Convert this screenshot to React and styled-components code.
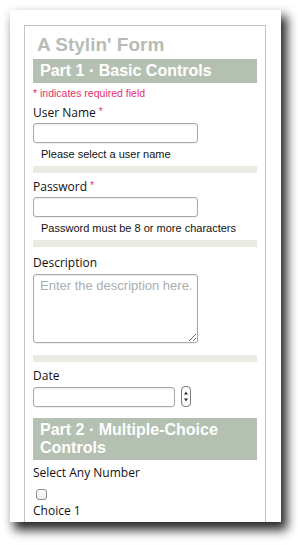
import React from "react";
import styled, { createGlobalStyle } from "styled-components";

const Global = createGlobalStyle`
  html, body { margin: 0; padding: 0; background: #ffffff; }
  body { font-family: "Open Sans", "Noto Sans", sans-serif; }
`;

const Page = styled.div`
  padding: 10px 0 0 10px;
  width: 298px;
  height: 545px;
  box-sizing: border-box;
  overflow: hidden;
`;

const Card = styled.div`
  width: 271px;
  height: 512px;
  background: #ffffff;
  box-shadow: 5px 7px 10px 1px rgba(0, 0, 0, 0.85);
  overflow: hidden;
  display: flex;
  flex-direction: column;
`;

const Box = styled.form`
  margin: 15px 0 0 14px;
  width: 242px;
  box-sizing: border-box;
  border: 1px solid #c4c4c4;
  border-bottom: none;
  padding: 0 8px 40px;
  display: flex;
  flex-direction: column;
`;

const Title = styled.h1`
  margin: 8px 0 0;
  padding-left: 4px;
  font: bold 19px/22px "Liberation Sans", Arial, sans-serif;
  color: #b7bcb5;
`;

const Band = styled.h2`
  margin: ${(p) => p.$mt}px 0 0;
  padding: 3px 7px;
  background: #b4c0b1;
  color: #ffffff;
  font: bold 16px/18px "Liberation Sans", Arial, sans-serif;
`;

const Note = styled.p`
  margin: 3px 0 0;
  font: 10.5px/14px "Liberation Sans", Arial, sans-serif;
  color: #e2306b;
`;

const Label = styled.label`
  display: block;
  margin-top: ${(p) => p.$mt}px;
  font-size: 12px;
  line-height: 16px;
  color: #111111;
`;

const Star = styled.span`
  color: #e2306b;
  font: 10px/10px "Liberation Sans", Arial, sans-serif;
  vertical-align: top;
  margin-left: 3px;
  position: relative;
  top: 2px;
`;

const fieldBase = `
  display: block;
  box-sizing: border-box;
  border: 1px solid #a8a8a8;
  border-radius: 3px;
  background: #ffffff;
  box-shadow: inset 0 1px 1px rgba(0,0,0,0.08), 0 1px 0 rgba(0,0,0,0.06);
  outline: none;
`;

const TextInput = styled.input`
  ${fieldBase}
  margin: ${(p) => p.$mt ?? 2}px 0 0;
  width: ${(p) => p.$w}px;
  height: 20px;
  padding: 0 4px;
`;

const Area = styled.textarea`
  ${fieldBase}
  margin: 3px 0 0;
  width: 165px;
  height: 69px;
  padding: 3px 2px 3px 6px;
  resize: both;
  overflow: hidden;
  font: 13px/16px "Liberation Sans", Arial, sans-serif;
  color: #222;
  &::placeholder { color: #a9aeb3; }
`;

const Hint = styled.p`
  margin: 5px 0 0;
  padding-left: 8px;
  font: 11px/13px "Liberation Sans", Arial, sans-serif;
  color: #111111;
`;

const Separator = styled.div`
  margin-top: ${(p) => p.$mt}px;
  height: 7px;
  background: #ebebe4;
`;

const DateRow = styled.div`
  display: flex;
  align-items: center;
  gap: 6px;
  margin-top: 2px;
`;

const Check = styled.input`
  appearance: none;
  -webkit-appearance: none;
  display: block;
  margin: 8px 0 0 3px;
  width: 11px;
  height: 11px;
  box-sizing: border-box;
  border: 1px solid #8e8e8e;
  border-radius: 3px;
  background: linear-gradient(#ffffff, #ececec);
`;

const Spinner = () => (
  <svg width="10" height="21" viewBox="0 0 10 21">
    <rect x="0.5" y="0.5" width="9" height="20" rx="3.5" fill="#fbfbfb" stroke="#7d7d7d" />
    <path d="M5 5.5 L7 8.5 L3 8.5 Z" fill="#333" />
    <path d="M5 15.5 L7 12.5 L3 12.5 Z" fill="#333" />
  </svg>
);

export default function App() {
  return (
    <>
      <Global />
      <Page>
        <Card>
          <Box onSubmit={(e) => e.preventDefault()}>
            <Title>A Stylin' Form</Title>
            <Band $mt={3}>Part 1 · Basic Controls</Band>
            <Note>* indicates required field</Note>

            <Label $mt={5}>
              User Name<Star>*</Star>
            </Label>
            <TextInput type="text" $w={165} />
            <Hint>Please select a user name</Hint>
            <Separator $mt={5} />

            <Label $mt={6}>
              Password<Star>*</Star>
            </Label>
            <TextInput type="password" $w={165} />
            <Hint>Password must be 8 or more characters</Hint>
            <Separator $mt={5} />

            <Label $mt={8}>Description</Label>
            <Area placeholder="Enter the description here." />
            <Separator $mt={12} />

            <Label $mt={6}>Date</Label>
            <DateRow>
              <TextInput type="text" $w={142} $mt={0} />
              <Spinner />
            </DateRow>
            <Band $mt={11}>Part 2 · Multiple-Choice Controls</Band>

            <Label $mt={5}>Select Any Number</Label>
            <Check type="checkbox" aria-label="Choice 1" />
            <Label $mt={3}>Choice 1</Label>
          </Box>
        </Card>
      </Page>
    </>
  );
}
